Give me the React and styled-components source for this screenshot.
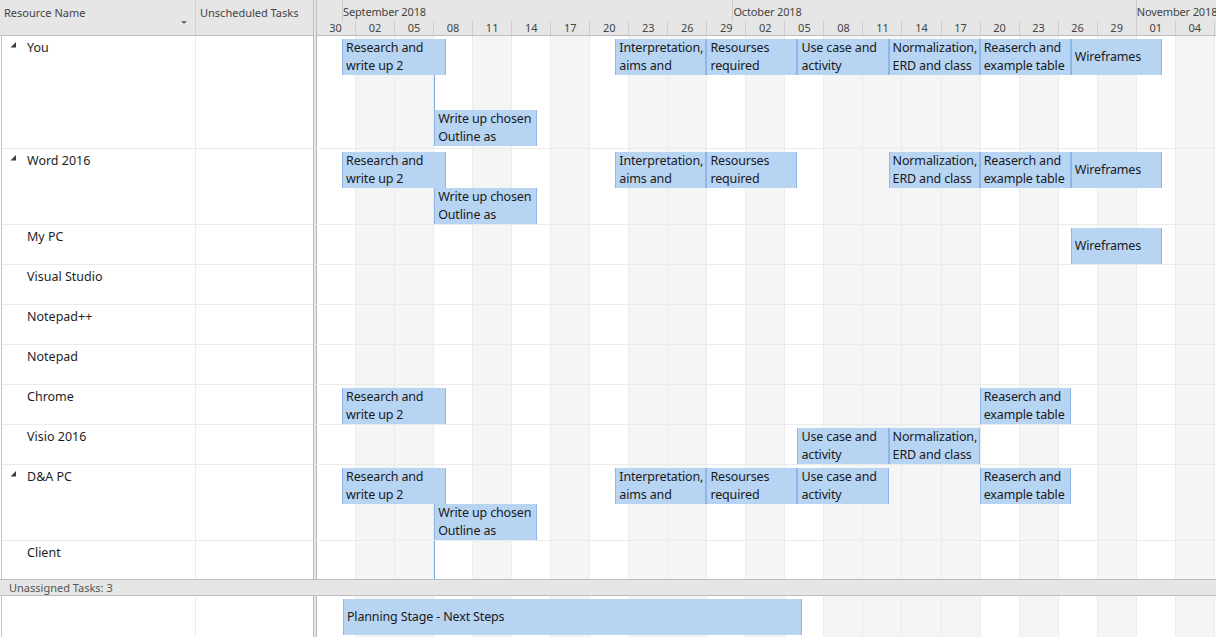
import React from 'react';
import styled, { createGlobalStyle } from 'styled-components';

const COL = 39.04;
const DAY = COL / 3;
const FONT = `"Noto Sans", "Open Sans", sans-serif`;

const Global = createGlobalStyle`
  *, *::before, *::after { box-sizing: border-box; }
  html, body { margin: 0; padding: 0; background: #fff; }
  body { font-family: ${FONT}; overflow: hidden; }
`;

const Page = styled.div`
  width: 1216px;
  height: 637px;
  overflow: hidden;
  display: flex;
  flex-direction: column;
  background: #fff;
`;

const Section = styled.div`
  display: flex;
  flex: none;
  height: ${(p) => p.$h}px;
  overflow: hidden;
`;

const LeftPane = styled.div`
  width: 313px;
  flex: none;
  display: flex;
  flex-direction: column;
`;

const Splitter = styled.div`
  width: 3px;
  flex: none;
  background: #e6e6e6;
  border-left: 1px solid #bcbcbc;
`;

const HeaderBar = styled.div`
  height: 36px;
  flex: none;
  display: flex;
  background: #e6e6e6;
  border-bottom: 1px solid #bcbcbc;
`;

const HeaderCell = styled.div`
  width: ${(p) => p.$w}px;
  flex: ${(p) => (p.$w ? 'none' : '1')};
  display: flex;
  justify-content: space-between;
  border-right: ${(p) => (p.$w ? '1px solid #d2d2d2' : 'none')};
  padding: 5px 0 0 4px;
  font-size: 11px;
  line-height: 16px;
  color: #444;
  white-space: nowrap;
`;

const SortArrow = styled.span`
  align-self: flex-end;
  margin: 0 8px 11px 0;
  width: 0;
  height: 0;
  border-left: 3px solid transparent;
  border-right: 3px solid transparent;
  border-top: 3px solid #6a6a6a;
`;

const LeftBody = styled.div`
  flex: 1;
  margin-left: 1px;
  border-left: 1px solid #c4c4c4;
  display: flex;
  flex-direction: column;
  min-height: 0;
`;

const ResourceRow = styled.div`
  display: flex;
  flex: none;
  height: ${(p) => (p.$h ? `${p.$h}px` : '100%')};
  border-bottom: ${(p) => (p.$h ? '1px solid #ebebeb' : 'none')};
`;

const NameCell = styled.div`
  width: 194px;
  flex: none;
  display: flex;
  align-items: flex-start;
  padding: 3px 0 0 8px;
  border-right: 1px solid #ebebeb;
  font-size: 12.5px;
  line-height: 18px;
  color: #1e1e1e;
  white-space: nowrap;
`;

const Toggle = styled.span`
  width: 17px;
  flex: none;
  display: flex;
  padding-top: 3px;
`;

const UnscheduledCell = styled.div`
  flex: 1;
`;

const TimelinePane = styled.div`
  flex: 1;
  min-width: 0;
  display: flex;
  flex-direction: column;
  box-shadow: inset 1px 0 0 #bcbcbc;
  overflow: hidden;
`;

const TimeHeader = styled.div`
  height: 36px;
  flex: none;
  background: #e6e6e6;
  border-bottom: 1px solid #bcbcbc;
  display: flex;
  flex-direction: column;
  box-shadow: inset 1px 0 0 #bcbcbc;
`;

const MonthRow = styled.div`
  height: 21px;
  display: flex;
`;

const MonthCell = styled.div`
  width: ${(p) => (p.$w ? `${p.$w}px` : 'auto')};
  flex: ${(p) => (p.$w ? 'none' : '1')};
  border-left: ${(p) => (p.$first ? 'none' : '1px solid #cacaca')};
  padding: 4px 0 0 0;
  font-size: 11px;
  letter-spacing: -0.15px;
  line-height: 16px;
  color: #444;
  white-space: nowrap;
  overflow: hidden;
`;

const DateRow = styled.div`
  height: 14px;
  display: flex;
`;

const DateCell = styled.div`
  width: ${COL}px;
  flex: none;
  border-left: ${(p) => (p.$first ? 'none' : '1px solid #cfcfcf')};
  text-align: center;
  font-size: 11px;
  line-height: 13px;
  color: #444;
`;

const TimeBody = styled.div`
  position: relative;
  flex: 1;
  min-height: 0;
  overflow: hidden;
`;

const GridLayer = styled.div`
  position: absolute;
  inset: 0;
  display: flex;
`;

const GridCol = styled.div`
  width: ${COL}px;
  flex: none;
  background: ${(p) => (p.$shaded ? '#f5f5f5' : 'transparent')};
  border-left: ${(p) => (p.$first ? 'none' : '1px solid #ebebeb')};
`;

const Rows = styled.div`
  position: relative;
  display: flex;
  flex-direction: column;
`;

const TimeRow = styled.div`
  position: relative;
  flex: none;
  height: ${(p) => p.$h}px;
  border-bottom: ${(p) => (p.$line ? '1px solid #ebebeb' : 'none')};
`;

const Bar = styled.div`
  position: absolute;
  height: 36px;
  background: #b8d4f3;
  border-left: 1px solid #8fb6e6;
  border-right: 1px solid #8fb6e6;
  padding: 0 0 0 3px;
  display: flex;
  flex-direction: column;
  justify-content: center;
  overflow: hidden;
  font-size: 12.5px;
  letter-spacing: -0.15px;
  line-height: 18px;
  color: #1a1a1a;
`;

const BarLine = styled.span`
  white-space: nowrap;
  overflow: hidden;
`;

const Marker = styled.div`
  position: absolute;
  width: 1px;
  background: #7ea9e0;
`;

const UnassignedStrip = styled.div`
  height: 17px;
  flex: none;
  background: #e6e6e6;
  border-top: 1px solid #bcbcbc;
  border-bottom: 1px solid #bcbcbc;
  padding-left: 9px;
  font-size: 11px;
  line-height: 15px;
  color: #555;
`;

const DATES = ['30', '02', '05', '08', '11', '14', '17', '20', '23', '26', '29', '02', '05', '08', '11', '14', '17', '20', '23', '26', '29', '01', '04', ''];
const SHADE = [0, 1, 1, 0, 1, 0, 1, 0, 1, 1, 0, 1, 0, 1, 1, 1, 1, 0, 1, 0, 1, 0, 1, 0];

const T = {
  research: { s: 2, e: 10, lines: ['Research and', 'write up 2'] },
  writeup: { s: 9.08, e: 17, lines: ['Write up chosen', 'Outline as'] },
  interp: { s: 23, e: 30, lines: ['Interpretation,', 'aims and'] },
  resources: { s: 30, e: 37, lines: ['Resourses', 'required'] },
  usecase: { s: 37, e: 44, lines: ['Use case and', 'activity'] },
  normal: { s: 44, e: 51, lines: ['Normalization,', 'ERD and class'] },
  reaserch: { s: 51, e: 58, lines: ['Reaserch and', 'example table'] },
  wire: { s: 58, e: 65, lines: ['Wireframes'] },
};

const RESOURCES = [
  {
    name: 'You', h: 113, toggle: true,
    bars: [
      [T.research, 3], [T.interp, 3], [T.resources, 3], [T.usecase, 3], [T.normal, 3], [T.reaserch, 3], [T.wire, 3], [T.writeup, 74],
    ],
    marker: { top: 38, h: 36 },
  },
  {
    name: 'Word 2016', h: 76, toggle: true,
    bars: [[T.research, 3], [T.interp, 3], [T.resources, 3], [T.normal, 3], [T.reaserch, 3], [T.wire, 3], [T.writeup, 39]],
  },
  { name: 'My PC', h: 40, bars: [[T.wire, 3]] },
  { name: 'Visual Studio', h: 40, bars: [] },
  { name: 'Notepad++', h: 40, bars: [] },
  { name: 'Notepad', h: 40, bars: [] },
  { name: 'Chrome', h: 40, bars: [[T.research, 3], [T.reaserch, 3]] },
  { name: 'Visio 2016', h: 40, bars: [[T.usecase, 3], [T.normal, 3]] },
  {
    name: 'D&A PC', h: 76, toggle: true,
    bars: [[T.research, 3], [T.interp, 3], [T.resources, 3], [T.usecase, 3], [T.reaserch, 3], [T.writeup, 39]],
  },
  { name: 'Client', h: 40, bars: [], marker: { top: 0, h: 40 } },
];

const PLANNING = { s: 2.07, e: 37.33, lines: ['Planning Stage - Next Steps'] };

function ExpandIcon() {
  return (
    <svg width="6" height="6" viewBox="0 0 6 6">
      <polygon points="6,0 6,5.5 0.5,5.5" fill="#3c3c3c" />
    </svg>
  );
}

function TaskBar({ task, top }) {
  return (
    <Bar style={{ left: `${task.s * DAY}px`, width: `${(task.e - task.s) * DAY}px`, top: `${top}px` }}>
      {task.lines.map((l, i) => (
        <BarLine key={i}>{l}</BarLine>
      ))}
    </Bar>
  );
}

function Grid() {
  return (
    <GridLayer>
      {SHADE.map((s, i) => (
        <GridCol key={i} $shaded={!!s} $first={i === 0} />
      ))}
    </GridLayer>
  );
}

export default function App() {
  return (
    <Page>
      <Global />
      <Section $h={579}>
        <LeftPane>
          <HeaderBar>
            <HeaderCell $w={196}>
              <span>Resource Name</span>
              <SortArrow />
            </HeaderCell>
            <HeaderCell>
              <span>Unscheduled Tasks</span>
            </HeaderCell>
          </HeaderBar>
          <LeftBody>
            {RESOURCES.map((r) => (
              <ResourceRow key={r.name} $h={r.h}>
                <NameCell>
                  <Toggle>{r.toggle ? <ExpandIcon /> : null}</Toggle>
                  {r.name}
                </NameCell>
                <UnscheduledCell />
              </ResourceRow>
            ))}
          </LeftBody>
        </LeftPane>
        <Splitter />
        <TimelinePane>
          <TimeHeader>
            <MonthRow>
              <MonthCell $first $w={2 * DAY} />
              <MonthCell $w={30 * DAY}>September 2018</MonthCell>
              <MonthCell $w={31 * DAY}>October 2018</MonthCell>
              <MonthCell>November 2018</MonthCell>
            </MonthRow>
            <DateRow>
              {DATES.map((d, i) => (
                <DateCell key={i} $first={i === 0}>{d}</DateCell>
              ))}
            </DateRow>
          </TimeHeader>
          <TimeBody>
            <Grid />
            <Rows>
              {RESOURCES.map((r) => (
                <TimeRow key={r.name} $h={r.h} $line>
                  {r.marker ? (
                    <Marker style={{ left: `${9.08 * DAY}px`, top: `${r.marker.top}px`, height: `${r.marker.h}px` }} />
                  ) : null}
                  {r.bars.map(([t, top], i) => (
                    <TaskBar key={i} task={t} top={top} />
                  ))}
                </TimeRow>
              ))}
            </Rows>
          </TimeBody>
        </TimelinePane>
      </Section>
      <UnassignedStrip>Unassigned Tasks: 3</UnassignedStrip>
      <Section $h={41}>
        <LeftPane>
          <LeftBody>
            <ResourceRow>
              <NameCell />
              <UnscheduledCell />
            </ResourceRow>
          </LeftBody>
        </LeftPane>
        <Splitter />
        <TimelinePane>
          <TimeBody>
            <Grid />
            <Rows>
              <TimeRow $h={41}>
                <TaskBar task={PLANNING} top={3} />
              </TimeRow>
            </Rows>
          </TimeBody>
        </TimelinePane>
      </Section>
    </Page>
  );
}
